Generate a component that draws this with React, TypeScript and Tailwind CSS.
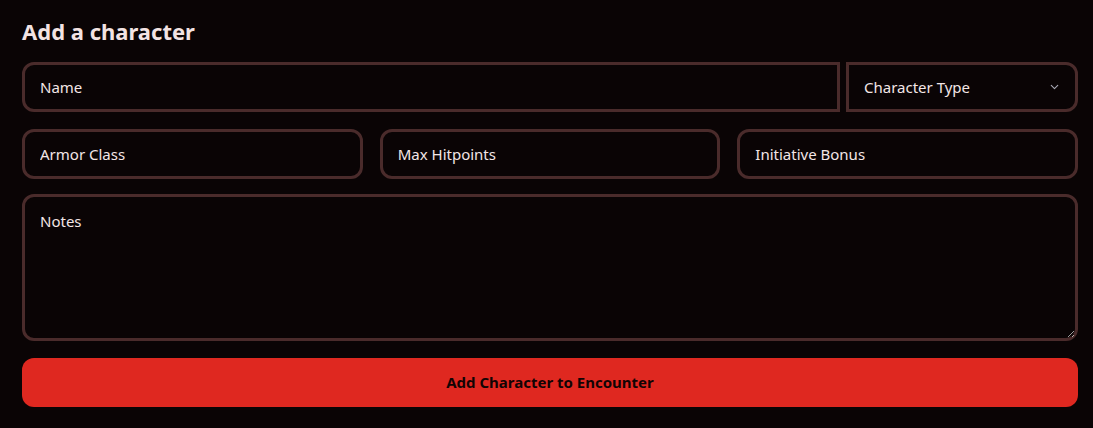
import { ChevronDown } from 'lucide-react';

const field =
  "h-[50px] w-full bg-transparent border-[3px] border-[#4a2b2b] px-[15px] text-[15px] text-[#f3e6e6] placeholder:text-[#f3e6e6] outline-none";

export default function App() {
  return (
    <div
      className="min-h-[428px] w-full bg-[#0a0405] pl-[22px] pr-[15px] pt-[16px]"
      style={{ fontFamily: '"Noto Sans", "Open Sans", sans-serif' }}
    >
      <h2 className="text-[22px] font-bold leading-[30px] text-[#f3e3e3]">Add a character</h2>

      <div className="mt-[16px] flex flex-col">
        {/* Name + type */}
        <div className="flex gap-[6px]">
          <input className={`${field} flex-1 rounded-l-[12px]`} placeholder="Name" />
          <div className="relative w-[232px] shrink-0">
            <select
              defaultValue=""
              className={`${field} appearance-none rounded-r-[12px] pr-[40px]`}
            >
              <option value="" disabled>
                Character Type
              </option>
              <option value="pc">Player</option>
              <option value="npc">NPC</option>
              <option value="monster">Monster</option>
            </select>
            <ChevronDown
              strokeWidth={2}
              className="pointer-events-none absolute right-[17px] top-1/2 h-[13px] w-[13px] -translate-y-1/2 text-[#a8a8b4]"
            />
          </div>
        </div>

        {/* Stats */}
        <div className="mt-[17px] grid grid-cols-3 gap-[17px]">
          <input className={`${field} rounded-[12px]`} placeholder="Armor Class" />
          <input className={`${field} rounded-[12px]`} placeholder="Max Hitpoints" />
          <input className={`${field} rounded-[12px]`} placeholder="Initiative Bonus" />
        </div>

        <textarea
          className="mt-[15px] h-[147px] w-full rounded-[12px] border-[3px] border-[#4a2b2b] bg-transparent px-[15px] py-[13px] text-[15px] text-[#f3e6e6] placeholder:text-[#f3e6e6] outline-none"
          placeholder="Notes"
        />

        <button className="mt-[17px] h-[49px] w-full rounded-[12px] bg-[#df2820] text-[15px] font-bold text-[#120404]">
          Add Character to Encounter
        </button>
      </div>
    </div>
  );
}
